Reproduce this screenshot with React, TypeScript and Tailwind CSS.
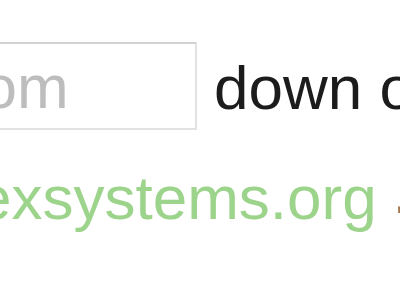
export default function App() {
  return (
    <div className="w-[400px] h-[300px] overflow-hidden bg-white font-['Liberation_Sans',Arial,sans-serif]">
      <div className="flex items-center pt-[42px] whitespace-nowrap">
        <input
          type="email"
          placeholder="you@example.com"
          className="shrink-0 ml-[-477px] w-[674px] h-[88px] px-[12px] border-2 border-[#e2e2e2] border-t-[#d2d2d2] bg-white text-[62px] leading-[71px] text-[#222] placeholder-[#bdbdbd] outline-none"
        />
        <span className="ml-[17px] text-[62px] leading-[71px] text-[#1c1c1c] pt-[3px]">down or</span>
      </div>
      <div className="mt-[32px] ml-[-54px] whitespace-nowrap text-[62px] leading-[71px]">
        <span className="text-[#9dd48c]">flexsystems.org</span>
        <span className="inline-block ml-[14px] translate-y-[7px] text-[#a57a52]">·</span>
      </div>
    </div>
  );
}
